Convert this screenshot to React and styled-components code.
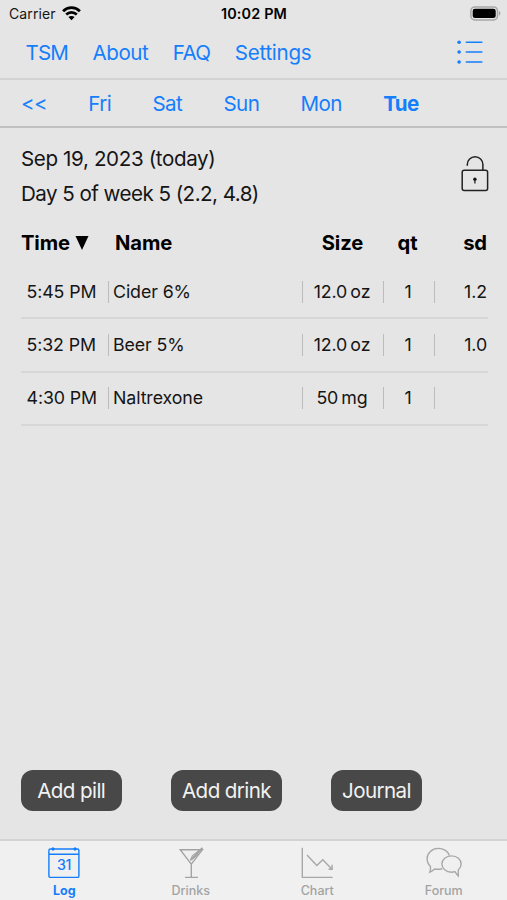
import React from "react"
import styled, { createGlobalStyle } from "styled-components"

const GlobalStyle = createGlobalStyle`
  * {
    box-sizing: border-box;
  }
  body {
    margin: 0;
    background: #e5e5e5;
    font-family: Inter, "Liberation Sans", sans-serif;
    -webkit-font-smoothing: antialiased;
  }
  button {
    font-family: inherit;
    border: none;
    background: none;
    padding: 0;
    margin: 0;
    white-space: nowrap;
  }
`
const Screen = styled.div`
  width: 507px;
  height: 900px;
  display: flex;
  flex-direction: column;
  overflow: hidden;
  background: #e5e5e5;
  color: #151515;
`
const StatusBar = styled.header`
  height: 27px;
  display: grid;
  grid-template-columns: 1fr auto 1fr;
  align-items: center;
  padding: 0 6px 0 9px;
  font-size: 14px;
  line-height: 26px;
`
const Carrier = styled.div`
  display: flex;
  align-items: center;
  gap: 6px;
  letter-spacing: 0.1px;
`
const Clock = styled.div`
  font-size: 14.4px;
  font-weight: 600;
  color: #000;
  letter-spacing: 0.15px;
  padding-right: 2px;
`
const Battery = styled.svg`
  justify-self: end;
`
const NavBar = styled.nav`
  height: 53px;
  display: flex;
  align-items: center;
  gap: 24.6px;
  padding: 0 24px 0 25.6px;
  border-bottom: 2px solid #d3d3d3;
`
const BlueButton = styled.button`
  color: #157efb;
  font-size: 20.6px;
  line-height: 26px;
  font-weight: ${props => (props.$active ? 700 : 400)};
  letter-spacing: ${props => props.$spacing || "0"};
`
const ListButton = styled(BlueButton)`
  display: flex;
  margin-left: auto;
  padding-bottom: 1px;
`
const DayBar = styled.nav`
  height: 48px;
  display: flex;
  align-items: center;
  gap: 41.3px;
  padding: 1px 21px 0;
  border-bottom: 2px solid #c0c0c0;
`
const Summary = styled.section`
  height: 90px;
  display: flex;
  justify-content: space-between;
  padding: 14px 18px 0 21px;
`
const SummaryText = styled.div`
  font-size: 20.6px;
  line-height: 34.6px;
  letter-spacing: ${props => props.$spacing};
`
const LockButton = styled.button`
  height: 38px;
  margin-top: 12.5px;
`
const Log = styled.main`
  flex: 1;
  padding: 0 19px 0 21px;
`
const LogRow = styled.div`
  display: grid;
  grid-template-columns: 87px 194px 81px 51px 1fr;
  align-items: center;
  height: 53.3px;
  font-size: 17.8px;
  border-bottom: 2px solid #d7d7d7;
`
const LogHeader = styled(LogRow)`
  height: 48px;
  padding-top: 2px;
  font-size: 20.2px;
  font-weight: 700;
  color: #000;
  border: none;
`
const Cell = styled.div`
  height: 22px;
  line-height: 22px;
  white-space: nowrap;
  text-align: ${props => props.$align || "left"};
  padding: ${props => props.$pad || "0"};
  letter-spacing: -0.1px;
  border-left: ${props => (props.$divided ? "1.5px solid #bcbcbc" : "none")};
`
const SortArrow = styled.svg`
  margin-left: 5px;
`
const Actions = styled.div`
  display: flex;
  gap: 49px;
  padding: 0 20.5px 28px;
`
const ActionButton = styled.button`
  width: ${props => props.$width}px;
  height: 41px;
  border-radius: 12px;
  background: #484848;
  color: #f2f2f2;
  font-size: 20.6px;
  letter-spacing: -0.6px;
`
const TabBar = styled.footer`
  height: 61px;
  display: grid;
  grid-template-columns: repeat(4, 1fr);
  padding-left: 1px;
  background: #f0f0f0;
  border-top: 2px solid #d3d3d3;
`
const Tab = styled.button`
  display: flex;
  flex-direction: column;
  align-items: center;
  padding-top: 6px;
  font-size: 12.5px;
  line-height: 15px;
  gap: 4px;
  color: ${props => (props.$active ? "#157efb" : "#a3a3a3")};
  font-weight: ${props => (props.$active ? 700 : 500)};
`

const WifiIcon = () => (
  <svg width="19" height="15" viewBox="0 0 19 15" fill="none" stroke="#000">
    <path d="M1.1 5.2C5.8.5 13.2.5 17.9 5.2" strokeWidth="2.8" />
    <path d="M4.2 8.5c3-2.9 7.6-2.9 10.6 0" strokeWidth="2.6" />
    <path d="M9.5 14.2 6.4 11.1c1.8-1.6 4.4-1.6 6.2 0z" fill="#000" stroke="none" />
  </svg>
)

const BatteryIcon = () => (
  <Battery width="31" height="15" viewBox="0 0 31 15" fill="none">
    <rect x="0.9" y="0.9" width="26.6" height="13" rx="4" stroke="#a6a6a6" strokeWidth="1.5" />
    <rect x="2.7" y="2.7" width="23" height="9.4" rx="2.3" fill="#000" />
    <path d="M29 5.1c1.9.7 1.9 3.9 0 4.6z" fill="#a6a6a6" />
  </Battery>
)

const ListIcon = () => (
  <svg width="26" height="24" viewBox="0 0 26 24" fill="#157efb">
    {[2.3, 12, 22].map(y => (
      <React.Fragment key={y}>
        <circle cx="2.1" cy={y} r="1.8" />
        <rect x="8.6" y={y - 0.75} width="17" height="1.5" rx="0.7" />
      </React.Fragment>
    ))}
  </svg>
)

const LockIcon = () => (
  <svg width="28" height="38" viewBox="0 0 28 38" fill="none" stroke="#222" strokeWidth="1.5">
    <rect x="1.2" y="15.2" width="25.4" height="20.2" rx="2" />
    <path d="M6.3 10.8V9.6a7.8 7.8 0 0 1 15.6 0v5.4" />
    <circle cx="13.9" cy="24.2" r="1.7" fill="#111" stroke="none" />
    <path d="M13.9 24.5v4.1" strokeWidth="1.3" />
  </svg>
)

const CalendarIcon = () => (
  <svg width="32" height="32" viewBox="0 0 32 32" fill="none" stroke="#157efb" strokeWidth="1.4">
    <rect x="0.9" y="2" width="30" height="28.4" rx="1.5" />
    <path d="M1 7.3h30M5 .2v3.6M27 .2v3.6" />
    <path d="M3.5 2h3M25.5 2h3" strokeWidth="2" />
    <text x="16" y="23.4" textAnchor="middle" fontSize="14.2" letterSpacing="-0.3" fontWeight="500" fill="#157efb" stroke="none">
      31
    </text>
  </svg>
)

const DrinkIcon = () => (
  <svg width="32" height="32" viewBox="0 0 32 32" fill="none" stroke="#a3a3a3" strokeWidth="1.4">
    <path d="M5.2 2.7h22.2L16.3 17.2zM16.3 17.2v13M10 30.4h13" />
    <path d="M16 12.8 27.4.9" strokeWidth="1.9" />
    <path d="M15.3 13.3l2.2-5 7-5.1-3 5.8z" fill="#a3a3a3" fillOpacity="0.45" strokeWidth="1" />
  </svg>
)

const ChartIcon = () => (
  <svg width="32" height="32" viewBox="0 0 32 32" fill="none" stroke="#a8a8a8" strokeWidth="1.4">
    <path d="M1.3.8v29.6h30.4" />
    <path d="M6 8l9.8 10.5 6-5.8 9 9.4M27.5 22.2h3.6v-4.4" />
  </svg>
)

const ForumIcon = () => (
  <svg width="36" height="32" viewBox="0 0 36 32" fill="none" stroke="#a8a8a8" strokeWidth="1.4">
    <path d="M23.4 8.5C22.2 4.3 17.6 1.4 12.3 1.4 6.1 1.4 1.1 6 1.1 11.6c0 3.3 1.3 6 3.4 7.9.1 2.3 0 4-.7 5.7 1.9-.8 3.2-1.9 4.8-3.2 2.6.5 5.2.2 7.7-.3" />
    <path d="M25.6 8.9c-5.5 0-9.7 3.6-9.7 8.1s4.2 8.2 9.7 8.2c1.2 0 2.3-.2 3.3-.5 1.1 1.7 2 3 3.4 4.2v-6c1.7-1.5 2.8-3.6 2.8-5.9 0-4.5-4-8.1-9.5-8.1z" />
  </svg>
)

const links = [
  { label: "TSM", spacing: "-0.9px" },
  { label: "About", spacing: "-0.5px" },
  { label: "FAQ", spacing: "-0.7px" },
  { label: "Settings", spacing: "-0.3px" },
]
const days = ["<<", "Fri", "Sat", "Sun", "Mon", "Tue"]
const entries = [
  { time: "5:45 PM", name: "Cider 6%", size: "12.0\u2009oz", qt: "1", sd: "1.2" },
  { time: "5:32 PM", name: "Beer 5%", size: "12.0\u2009oz", qt: "1", sd: "1.0" },
  { time: "4:30 PM", name: "Naltrexone", size: "50\u2009mg", qt: "1", sd: "" },
]
const tabs = [
  { label: "Log", icon: <CalendarIcon />, active: true },
  { label: "Drinks", icon: <DrinkIcon /> },
  { label: "Chart", icon: <ChartIcon /> },
  { label: "Forum", icon: <ForumIcon /> },
]

const Entry = ({ time, name, size, qt, sd }) => (
  <LogRow>
    <Cell $pad="0 0 0 5.5px">{time}</Cell>
    <Cell $divided $pad="0 0 0 4px">{name}</Cell>
    <Cell $divided $align="center" $pad="0 2px 0 0">{size}</Cell>
    <Cell $divided $align="center" $pad="0 2px 0 0">{qt}</Cell>
    <Cell $divided $align="right" $pad="0 1px 0 0">{sd}</Cell>
  </LogRow>
)

const App = () => (
  <>
    <GlobalStyle />
    <Screen>
      <StatusBar>
        <Carrier>
          Carrier
          <WifiIcon />
        </Carrier>
        <Clock>10:02 PM</Clock>
        <BatteryIcon />
      </StatusBar>
      <NavBar>
        {links.map(link => (
          <BlueButton key={link.label} $spacing={link.spacing}>
            {link.label}
          </BlueButton>
        ))}
        <ListButton aria-label="List">
          <ListIcon />
        </ListButton>
      </NavBar>
      <DayBar>
        {days.map(day => (
          <BlueButton key={day} $active={day === "Tue"} $spacing="-0.6px">
            {day}
          </BlueButton>
        ))}
      </DayBar>
      <Summary>
        <div>
          <SummaryText $spacing="-0.38px">Sep 19, 2023 (today)</SummaryText>
          <SummaryText $spacing="-0.55px">Day 5 of week 5 (2.2, 4.8)</SummaryText>
        </div>
        <LockButton aria-label="Unlock">
          <LockIcon />
        </LockButton>
      </Summary>
      <Log>
        <LogHeader>
          <Cell>
            Time
            <SortArrow width="14" height="14" viewBox="0 0 14 14">
              <path d="M0.5 0h13L7 14z" />
            </SortArrow>
          </Cell>
          <Cell $pad="0 0 0 7px">Name</Cell>
          <Cell $align="center">Size</Cell>
          <Cell $align="center" $pad="0 2px 0 0">qt</Cell>
          <Cell $align="right" $pad="0 1px 0 0">sd</Cell>
        </LogHeader>
        {entries.map(entry => (
          <Entry key={entry.time} {...entry} />
        ))}
      </Log>
      <Actions>
        <ActionButton $width={101.5}>Add pill</ActionButton>
        <ActionButton $width={111}>Add drink</ActionButton>
        <ActionButton $width={91}>Journal</ActionButton>
      </Actions>
      <TabBar>
        {tabs.map(tab => (
          <Tab key={tab.label} $active={tab.active}>
            {tab.icon}
            {tab.label}
          </Tab>
        ))}
      </TabBar>
    </Screen>
  </>
)

export default App
